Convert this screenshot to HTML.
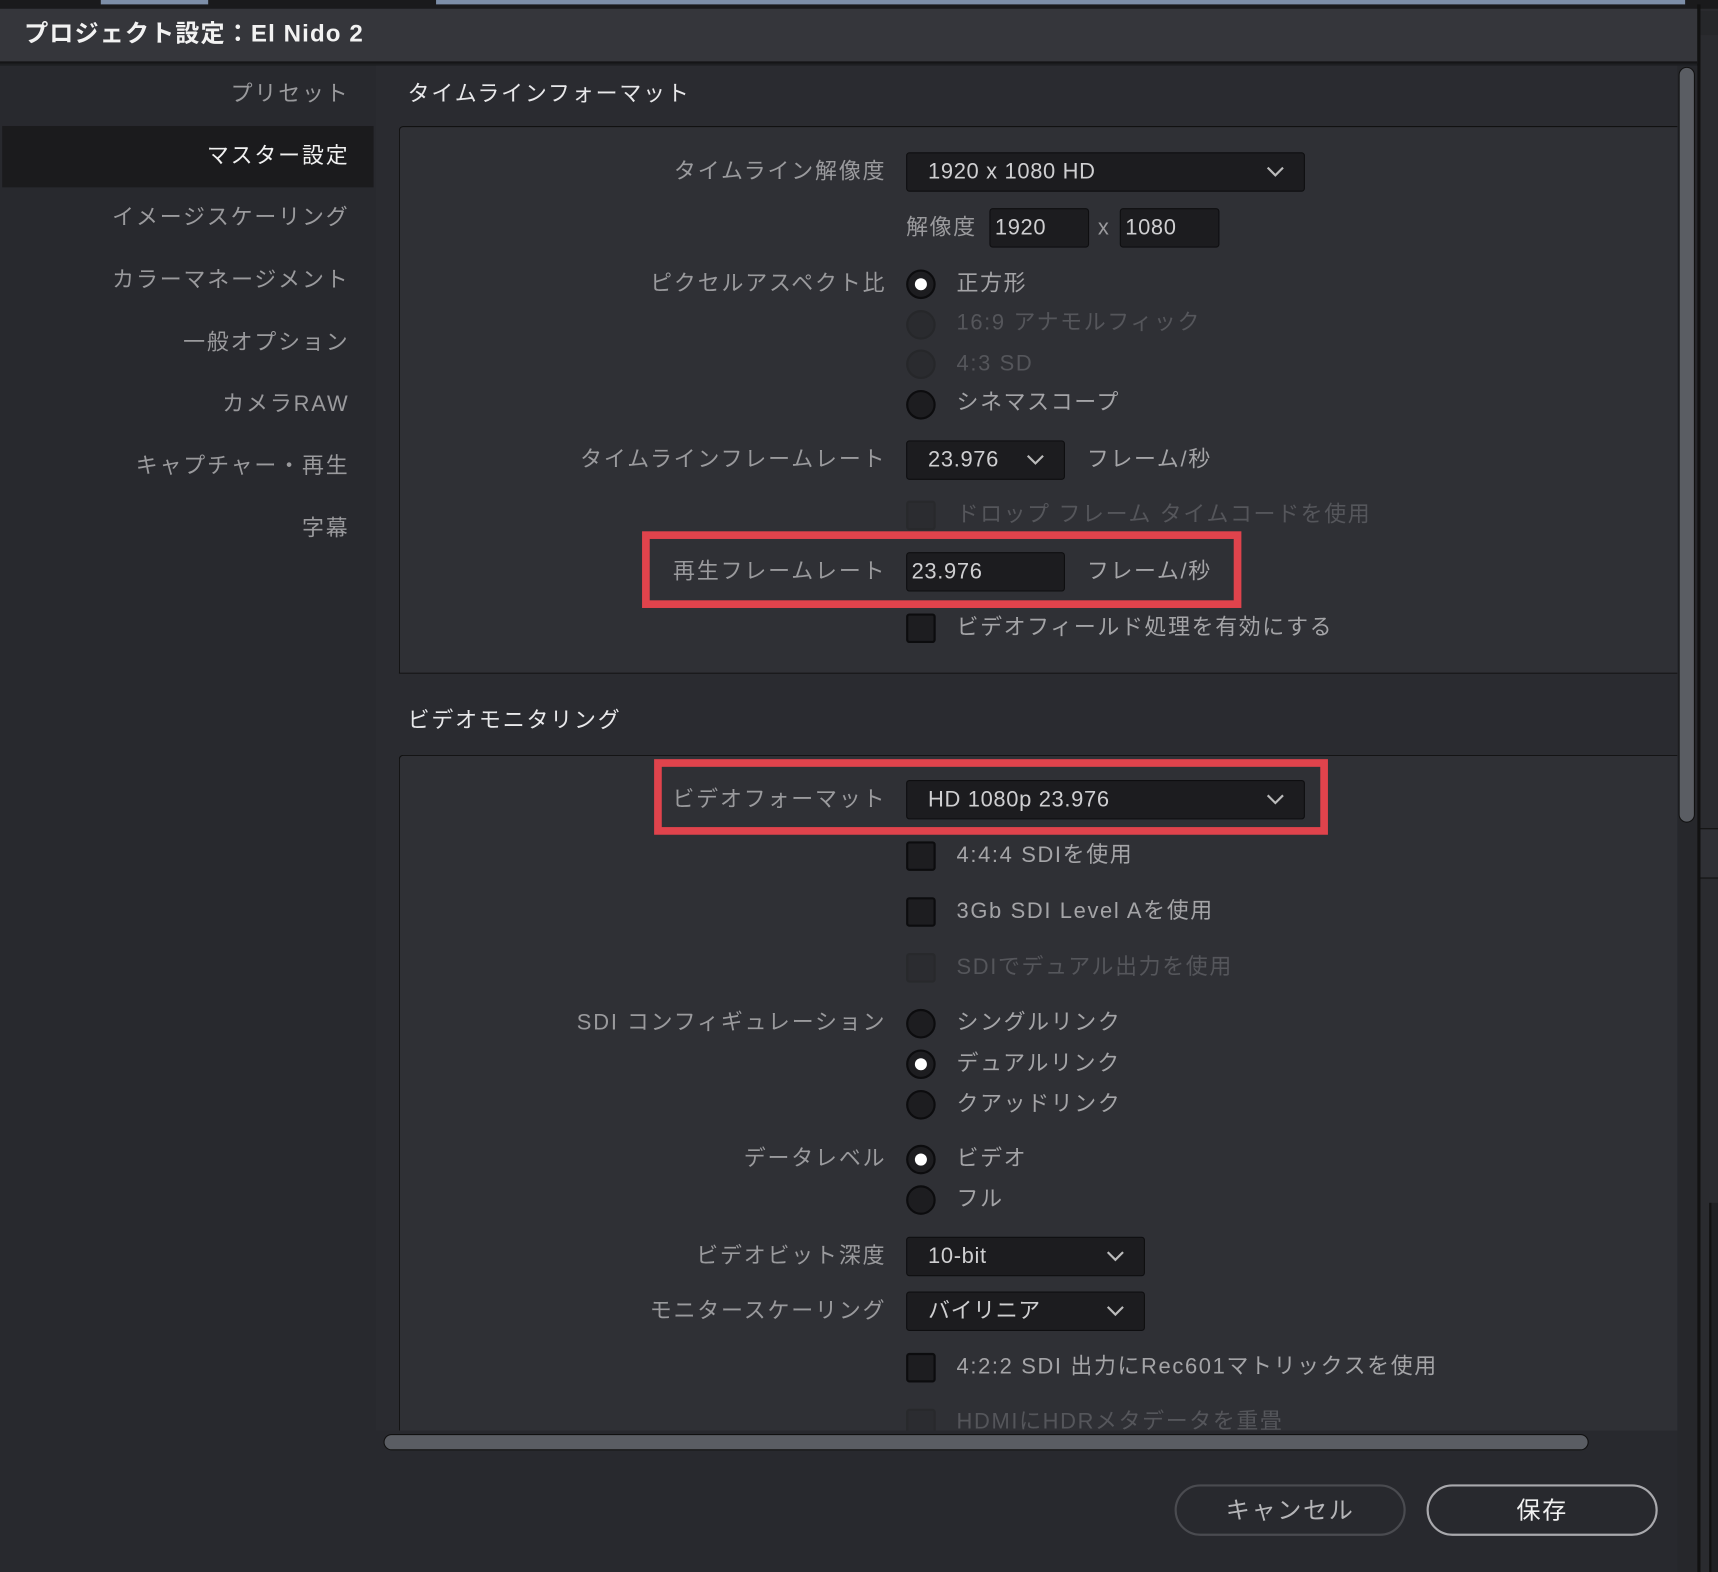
<!DOCTYPE html>
<html><head><meta charset="utf-8"><style>
*{margin:0;padding:0;box-sizing:border-box}
html,body{width:1718px;height:1572px;overflow:hidden;background:#1e1f22}
#w{position:absolute;left:0;top:0;width:1568px;height:1435px;transform:scale(1.09566,1.09547);transform-origin:0 0;font-family:"Liberation Sans","Noto Sans CJK JP",sans-serif;background:#1e1f22}
div,span{position:absolute}
.l{right:759px;font-size:20px;line-height:24px;color:#9a9a9d;white-space:nowrap;letter-spacing:1.7px}
.t{left:873px;font-size:20px;line-height:24px;color:#a4a4a7;white-space:nowrap;letter-spacing:1.5px}
.d{color:#55565b}
.nav{right:1249px;font-size:20px;line-height:24px;color:#9a9a9d;white-space:nowrap;letter-spacing:1.7px}
.dd{background:#1c1c1f;border:1px solid #0e0e10;border-radius:3px;height:36px;color:#cfcfd1;font-size:20px;line-height:34px;padding-left:19px;white-space:nowrap;letter-spacing:0.6px}
.dd svg{position:absolute;right:18px;top:12px}
.in{background:#1c1c1f;border:1px solid #0e0e10;border-radius:3px;height:36px;color:#cfcfd1;font-size:20px;line-height:34px;padding-left:4px;letter-spacing:0.6px}
.r{left:827px;width:27px;height:27px;border-radius:50%;background:#1d1d20;border:2px solid #0c0c0e}
.r.on:after{content:"";position:absolute;left:6px;top:6px;width:11px;height:11px;border-radius:50%;background:#fff}
.r.dis{background:#2a2b2f;border-color:#26272a}
.c{left:827px;width:27px;height:27px;border-radius:3px;background:#1d1d20;border:2px solid #0c0c0e}
.c.dis{background:#2b2c30;border-color:#28292c}
.red{border:7px solid #e0434c}
.fs{font-size:20px;line-height:24px;color:#a4a4a7;letter-spacing:1.5px;white-space:nowrap}
</style></head><body><div id="w">
<div style="left:0;top:0;width:1568px;height:8px;background:#1a1a1c"></div>
<div style="left:92px;top:0;width:98px;height:4px;background:#7d8ea8"></div>
<div style="left:398px;top:0;width:1140px;height:4px;background:#7d8ea8"></div>
<div style="left:1552px;top:8px;width:16px;height:1427px;background:#2a2b2f"></div>
<div style="left:1552px;top:10px;width:16px;height:22px;background:#26272a"></div>
<div style="left:1552px;top:756px;width:16px;height:46px;background:#2f3035;border-top:1px solid #111;border-bottom:1px solid #111"></div>
<div style="left:1560px;top:1098px;width:8px;height:337px;background:#202124;border-left:2px solid #111"></div>
<div style="left:1549px;top:4px;width:3px;height:1431px;background:#111"></div>
<div style="left:0;top:8px;width:1549px;height:50px;background:#35363b;border-bottom:2px solid #151517"></div>
<div style="left:22px;top:17px;font-size:22px;line-height:28px;color:#f2f2f2;font-weight:bold;letter-spacing:1px">プロジェクト設定：El Nido 2</div>
<div style="left:0;top:60px;width:1549px;height:1375px;background:#28292e"></div>
<div style="left:2px;top:115px;width:339px;height:56px;background:#1b1b1d"></div>
<div class="nav" style="top:74px">プリセット</div>
<div class="nav" style="top:131px;color:#f0f0f0">マスター設定</div>
<div class="nav" style="top:187px">イメージスケーリング</div>
<div class="nav" style="top:244px">カラーマネージメント</div>
<div class="nav" style="top:301px">一般オプション</div>
<div class="nav" style="top:357px">カメラRAW</div>
<div class="nav" style="top:414px">キャプチャー・再生</div>
<div class="nav" style="top:471px">字幕</div>
<div style="left:343px;top:60px;width:1188px;height:1246px;background:#2a2b30"></div>
<div style="left:372px;top:74px;font-size:20px;line-height:24px;color:#e8e8ea;letter-spacing:1.7px">タイムラインフォーマット</div>
<div style="left:364px;top:115px;width:1167px;height:500px;background:#2f3035;border:1px solid #111;border-right:none;border-top-left-radius:4px"></div>
<div style="left:372px;top:646px;font-size:20px;line-height:24px;color:#e8e8ea;letter-spacing:1.7px">ビデオモニタリング</div>
<div style="left:364px;top:689px;width:1167px;height:617px;background:#2f3035;border:1px solid #111;border-right:none;border-bottom:none;border-top-left-radius:4px"></div>
<div style="left:1531px;top:60px;width:18px;height:1375px;background:#26272b"></div>
<div style="left:1532px;top:61px;width:15px;height:690px;background:#5a5d63;border:1px solid #111;border-radius:8px"></div>
<div style="left:350px;top:1309px;width:1100px;height:15px;background:#5a5d63;border:1px solid #111;border-radius:8px"></div>
<div class="l" style="top:145px">タイムライン解像度</div>
<div class="dd" style="left:827px;top:139px;width:364px">1920 x 1080 HD<svg width="16" height="10"><path d="M1 1 L8 8 L15 1" stroke="#bbb" stroke-width="2" fill="none"/></svg></div>
<div style="left:827px;top:196px;font-size:20px;line-height:24px;color:#9a9a9d;letter-spacing:1.5px">解像度</div>
<div class="in" style="left:903px;top:190px;width:91px">1920</div>
<div style="left:1002px;top:196px;font-size:20px;line-height:24px;color:#9a9a9d">x</div>
<div class="in" style="left:1022px;top:190px;width:91px">1080</div>
<div class="l" style="top:247px">ピクセルアスペクト比</div>
<div class="r on" style="top:246px"></div><div class="t" style="top:247px">正方形</div>
<div class="r dis" style="top:283px"></div><div class="t d" style="top:283px">16:9 アナモルフィック</div>
<div class="r dis" style="top:319px"></div><div class="t d" style="top:320px">4:3 SD</div>
<div class="r" style="top:356px"></div><div class="t" style="top:356px">シネマスコープ</div>
<div class="l" style="top:408px">タイムラインフレームレート</div>
<div class="dd" style="left:827px;top:402px;width:145px">23.976<svg width="16" height="10"><path d="M1 1 L8 8 L15 1" stroke="#bbb" stroke-width="2" fill="none"/></svg></div>
<div class="fs" style="left:992px;top:408px">フレーム/秒</div>
<div class="c dis" style="top:457px"></div><div class="t d" style="top:458px">ドロップ フレーム タイムコードを使用</div>
<div class="l" style="top:510px">再生フレームレート</div>
<div class="in" style="left:827px;top:504px;width:145px">23.976</div>
<div class="fs" style="left:992px;top:510px">フレーム/秒</div>
<div class="red" style="left:586px;top:485px;width:547px;height:70px"></div>
<div class="c" style="top:560px"></div><div class="t" style="top:561px">ビデオフィールド処理を有効にする</div>
<div class="l" style="top:718px">ビデオフォーマット</div>
<div class="dd" style="left:827px;top:712px;width:364px">HD 1080p 23.976<svg width="16" height="10"><path d="M1 1 L8 8 L15 1" stroke="#bbb" stroke-width="2" fill="none"/></svg></div>
<div class="red" style="left:597px;top:693px;width:615px;height:69px"></div>
<div class="c" style="top:768px"></div><div class="t" style="top:769px">4:4:4 SDIを使用</div>
<div class="c" style="top:819px"></div><div class="t" style="top:820px">3Gb SDI Level Aを使用</div>
<div class="c dis" style="top:870px"></div><div class="t d" style="top:871px">SDIでデュアル出力を使用</div>
<div class="l" style="top:922px">SDI コンフィギュレーション</div>
<div class="r" style="top:921px"></div><div class="t" style="top:922px">シングルリンク</div>
<div class="r on" style="top:958px"></div><div class="t" style="top:959px">デュアルリンク</div>
<div class="r" style="top:995px"></div><div class="t" style="top:996px">クアッドリンク</div>
<div class="l" style="top:1046px">データレベル</div>
<div class="r on" style="top:1045px"></div><div class="t" style="top:1046px">ビデオ</div>
<div class="r" style="top:1082px"></div><div class="t" style="top:1083px">フル</div>
<div class="l" style="top:1135px">ビデオビット深度</div>
<div class="dd" style="left:827px;top:1129px;width:218px">10-bit<svg width="16" height="10"><path d="M1 1 L8 8 L15 1" stroke="#bbb" stroke-width="2" fill="none"/></svg></div>
<div class="l" style="top:1185px">モニタースケーリング</div>
<div class="dd" style="left:827px;top:1179px;width:218px">バイリニア<svg width="16" height="10"><path d="M1 1 L8 8 L15 1" stroke="#bbb" stroke-width="2" fill="none"/></svg></div>
<div class="c" style="top:1235px"></div><div class="t" style="top:1236px">4:2:2 SDI 出力にRec601マトリックスを使用</div>
<div style="left:364px;top:1280px;width:1167px;height:26px;overflow:hidden">
<div class="c dis" style="left:463px;top:6px"></div><div class="t d" style="left:509px;top:6px">HDMIにHDRメタデータを重畳</div></div>
<div style="left:1072px;top:1355px;width:211px;height:47px;border:2px solid #4a4b50;border-radius:24px;color:#b5b5b8;font-size:22px;line-height:43px;text-align:center;letter-spacing:1.5px">キャンセル</div>
<div style="left:1302px;top:1355px;width:211px;height:47px;border:2px solid #a9a9ad;border-radius:24px;color:#f0f0f0;font-size:22px;line-height:43px;text-align:center;letter-spacing:1.5px">保存</div>
</div></body></html>
